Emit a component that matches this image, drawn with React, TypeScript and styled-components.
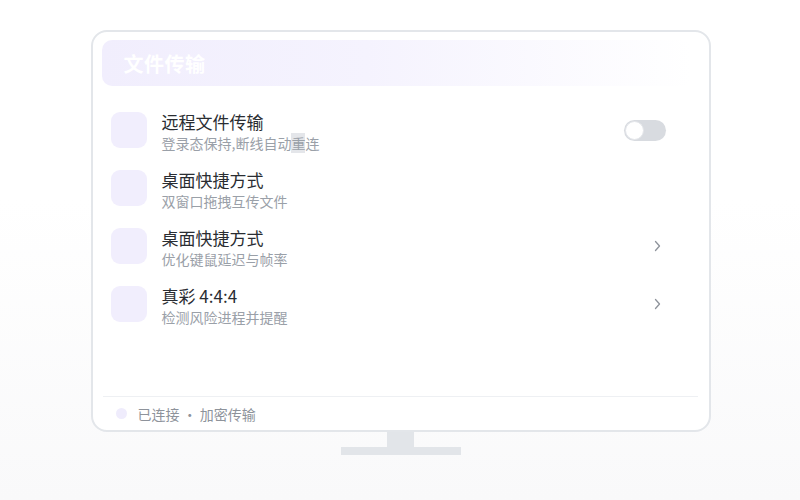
import React from "react";
import styled, { createGlobalStyle } from "styled-components";

const Global = createGlobalStyle`
  html, body { margin: 0; padding: 0; }
  body {
    width: 800px;
    height: 500px;
    overflow: hidden;
    background: linear-gradient(180deg, #ffffff 0%, #ffffff 40%, #f9f9fa 100%);
    font-family: "Noto Sans CJK SC", "Noto Sans", "Liberation Sans", sans-serif;
  }
`;

const Page = styled.div`
  display: flex;
  flex-direction: column;
  align-items: center;
  padding-top: 30px;
  padding-left: 1px;
`;

const Monitor = styled.div`
  box-sizing: border-box;
  width: 620px;
  height: 402px;
  border: 2px solid #e3e6ea;
  border-radius: 16px;
  background: #ffffff;
  padding: 8px 9px 0 9px;
  display: flex;
  flex-direction: column;
`;

const Header = styled.div`
  height: 46px;
  border-radius: 10px;
  background: linear-gradient(90deg, #f1eefd 0%, #f5f3fe 45%, #ffffff 100%);
  display: flex;
  align-items: center;
  padding-left: 22px;
  margin-right: 9px;
`;

const HeaderTitle = styled.div`
  color: #ffffff;
  font-size: 20px;
  font-weight: 700;
  letter-spacing: 0.5px;
`;

const List = styled.div`
  flex: 1;
  display: flex;
  flex-direction: column;
  margin-top: 15px;
  padding: 0 34px 0 9px;
`;

const Row = styled.div`
  box-sizing: border-box;
  height: 58px;
  display: flex;
  align-items: center;
`;

const Icon = styled.div`
  width: 36px;
  height: 36px;
  border-radius: 9px;
  background: #f1eefd;
  flex-shrink: 0;
`;

const Texts = styled.div`
  flex: 1;
  margin-left: 15px;
  margin-top: 4px;
  display: flex;
  flex-direction: column;
`;

const Title = styled.div`
  font-size: 17px;
  line-height: 22px;
  color: #2a2d32;
`;

const Sub = styled.div`
  font-size: 14px;
  line-height: 21px;
  color: #9aa0a8;
`;

const Mark = styled.span`
  background: #e4e6ea;
`;

const Toggle = styled.div`
  box-sizing: border-box;
  width: 42px;
  height: 21px;
  border-radius: 11px;
  background: #d8dbe0;
  padding: 1px;
  display: flex;
  align-items: center;
`;

const Knob = styled.div`
  box-sizing: border-box;
  width: 19px;
  height: 19px;
  border-radius: 50%;
  background: #ffffff;
  border: 1px solid #e4e6ea;
`;

const Chevron = styled.svg`
  margin-right: 5px;
`;

const Footer = styled.div`
  height: 33px;
  border-top: 1px solid #eef0f3;
  margin: 0 2px 0 1px;
  display: flex;
  align-items: center;
  padding-left: 13px;
`;

const Dot = styled.div`
  width: 11px;
  height: 11px;
  border-radius: 50%;
  background: #efecfc;
`;

const FooterText = styled.div`
  margin-left: 11px;
  font-size: 14px;
  color: #8e939b;
`;

const Neck = styled.div`
  width: 27px;
  height: 15px;
  background: #e2e5e9;
`;

const Base = styled.div`
  width: 120px;
  height: 8px;
  background: #e2e5e9;
`;

const Arrow = () => (
  <Chevron width="7" height="12" viewBox="0 0 7 12">
    <polyline points="1.5,1.5 5.5,6 1.5,10.5" fill="none" stroke="#8e939b" strokeWidth="1.3" strokeLinecap="round" strokeLinejoin="round" />
  </Chevron>
);

export default function App() {
  return (
    <>
      <Global />
      <Page>
        <Monitor>
          <Header>
            <HeaderTitle>文件传输</HeaderTitle>
          </Header>
          <List>
            <Row>
              <Icon />
              <Texts>
                <Title>远程文件传输</Title>
                <Sub>
                  登录态保持,断线自动<Mark>重</Mark>连
                </Sub>
              </Texts>
              <Toggle>
                <Knob />
              </Toggle>
            </Row>
            <Row>
              <Icon />
              <Texts>
                <Title>桌面快捷方式</Title>
                <Sub>双窗口拖拽互传文件</Sub>
              </Texts>
            </Row>
            <Row>
              <Icon />
              <Texts>
                <Title>桌面快捷方式</Title>
                <Sub>优化键鼠延迟与帧率</Sub>
              </Texts>
              <Arrow />
            </Row>
            <Row>
              <Icon />
              <Texts>
                <Title>真彩 4:4:4</Title>
                <Sub>检测风险进程并提醒</Sub>
              </Texts>
              <Arrow />
            </Row>
          </List>
          <Footer>
            <Dot />
            <FooterText>已连接 · 加密传输</FooterText>
          </Footer>
        </Monitor>
        <Neck />
        <Base />
      </Page>
    </>
  );
}
